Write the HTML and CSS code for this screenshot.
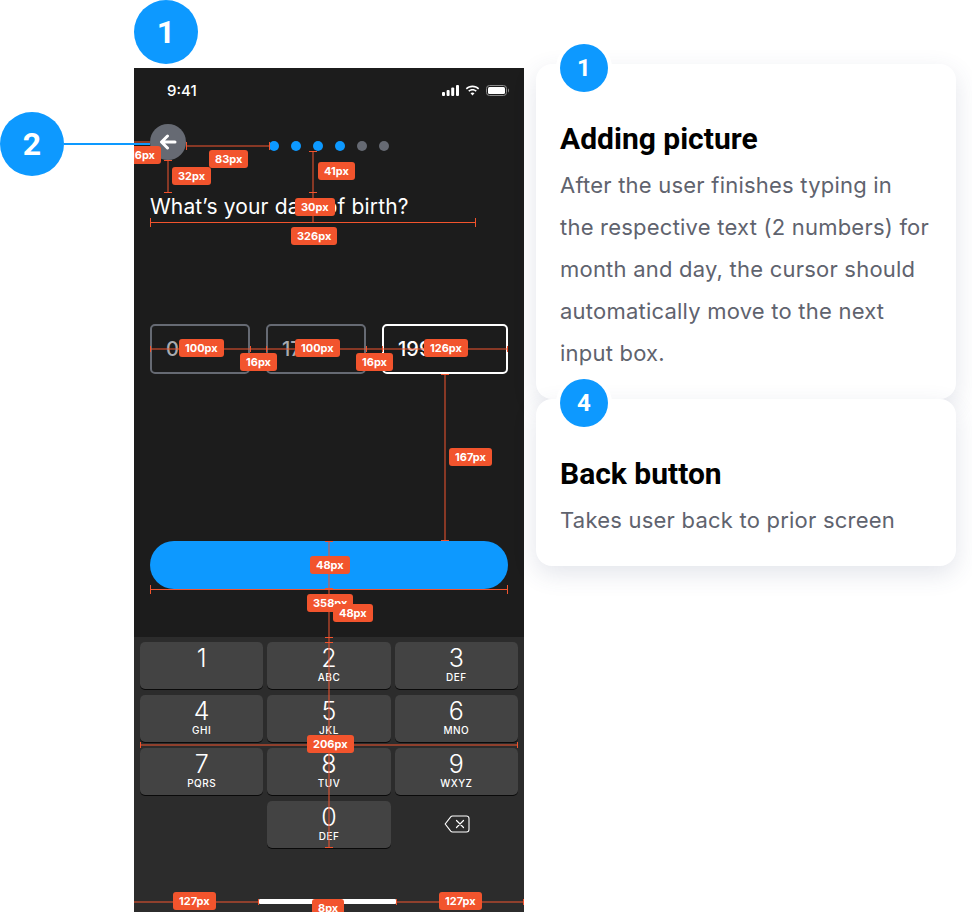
FILE: index.html
```html
<!DOCTYPE html>
<html lang="en">

<head>
    <meta charset="UTF-8">
    <meta name="viewport" content="width=device-width, initial-scale=1.0">
    <title>Date of birth - Annotated spec</title>
    <link rel="stylesheet" href="styles.css">
</head>

<body>
    <div class="canvas">
        <span class="marker marker-screen">1</span>
        <span class="marker marker-back">2</span>
        <div class="marker-line"></div>

        <div class="phone">
            <div class="status-bar">
                <span class="time">9:41</span>
                <div class="status-icons">
                    <svg width="17" height="11" viewBox="0 0 17 11">
                        <rect x="0" y="7" width="3" height="4" rx="1" fill="#fff" />
                        <rect x="4.600" y="5" width="3" height="6" rx="1" fill="#fff" />
                        <rect x="9.200" y="2.500" width="3" height="8.500" rx="1" fill="#fff" />
                        <rect x="14" y="0" width="3" height="11" rx="1" fill="#fff" />
                    </svg>
                    <svg width="15" height="11" viewBox="0 0 15 11">
                        <path d="M7.500 2.200c2.200 0 4.100.8 5.600 2.200l1.100-1.200C12.400 1.400 10.100.4 7.500.4S2.600 1.400.8 3.200l1.100 1.200c1.500-1.400 3.400-2.200 5.600-2.200z" fill="#fff" />
                        <path d="M7.500 5.600c1.200 0 2.300.5 3.200 1.200l1.100-1.200c-1.200-1-2.700-1.700-4.300-1.700s-3.100.7-4.300 1.700l1.100 1.200c.9-.7 2-1.200 3.200-1.200z" fill="#fff" />
                        <path d="M7.500 7.400c-.8 0-1.500.3-2 .8l2 2.300 2-2.300c-.5-.5-1.200-.8-2-.8z" fill="#fff" />
                    </svg>
                    <svg width="23" height="11" viewBox="0 0 23 11">
                        <rect x=".5" y=".5" width="20" height="10" rx="3" fill="none" stroke="#8a8a8a" />
                        <rect x="2" y="2" width="17" height="7" rx="1.500" fill="#fff" />
                        <path d="M22 3.500v4c.6-.3 1-1.100 1-2s-.4-1.700-1-2z" fill="#8a8a8a" />
                    </svg>
                </div>
            </div>

            <div class="main-content">
                <div class="top-row">
                    <div class="back-btn">
                        <svg width="18" height="16" viewBox="0 0 18 16">
                            <path d="M16 8H3M8.500 2 2.500 8l6 6" fill="none" stroke="#fff" stroke-width="3" stroke-linecap="round" stroke-linejoin="round" />
                        </svg>
                    </div>
                    <div class="dots">
                        <span class="dot on"></span>
                        <span class="dot on"></span>
                        <span class="dot on"></span>
                        <span class="dot on"></span>
                        <span class="dot"></span>
                        <span class="dot"></span>
                    </div>
                </div>

                <h2 class="question">What’s your date of birth?</h2>

                <div class="date-inputs">
                    <div class="date-box short">01</div>
                    <div class="date-box short">17</div>
                    <div class="date-box active">1990</div>
                </div>

                <div class="next-btn"></div>
            </div>

            <div class="keyboard">
                <div class="keys">
                    <div class="key"><span class="num">1</span></div>
                    <div class="key"><span class="num">2</span><span class="sub">ABC</span></div>
                    <div class="key"><span class="num">3</span><span class="sub">DEF</span></div>
                    <div class="key"><span class="num">4</span><span class="sub">GHI</span></div>
                    <div class="key"><span class="num">5</span><span class="sub">JKL</span></div>
                    <div class="key"><span class="num">6</span><span class="sub">MNO</span></div>
                    <div class="key"><span class="num">7</span><span class="sub">PQRS</span></div>
                    <div class="key"><span class="num">8</span><span class="sub">TUV</span></div>
                    <div class="key"><span class="num">9</span><span class="sub">WXYZ</span></div>
                    <div class="key-empty"></div>
                    <div class="key"><span class="num">0</span><span class="sub">DEF</span></div>
                    <div class="key-empty">
                        <svg class="backspace" width="26" height="18" viewBox="0 0 26 18">
                            <path d="M8.500 1h14a2.500 2.500 0 0 1 2.500 2.500v11a2.500 2.500 0 0 1-2.500 2.500h-14a2.500 2.500 0 0 1-1.800-.8L1.200 9l5.500-7.200a2.500 2.500 0 0 1 1.800-.8z" fill="none" stroke="#fff" stroke-width="1.100" />
                            <path d="M12.500 5.500l7 7M19.500 5.500l-7 7" fill="none" stroke="#fff" stroke-width="1.200" stroke-linecap="round" />
                        </svg>
                    </div>
                </div>
                <div class="home-bar"></div>
            </div>

            <!-- measuring lines, in page coordinates -->
            <svg class="measure-lines" width="390" height="844" viewBox="134 68 390 844">
                <g class="dim">
                    <path d="M134 142H150M186 146H269M168 160V192M313 151V222M150 349H508M445 374V541M329 541V848M140 745H518M134 902H258M397 902H524" />
                </g>
                <g class="bright">
                    <path d="M150 222.500H476M150 589.500H508" />
                    <path d="M150.500 218V227M475.500 218V227M150.500 585V594M507.500 585V594" />
                    <path d="M186.500 142V150M269.500 142V150M164 160.500H172M164 192.500H172M309 151.500H317M309 192.500H317" />
                    <path d="M150.500 346V352M250.500 346V352M266.500 346V352M366.500 346V352M382.500 346V352M507.500 346V352" />
                    <path d="M441 374.500H449M441 540.500H449M325 541.500H333M325 588.500H333M325 637.500H333M325 642.500H333M325 847.500H333" />
                    <path d="M140.500 742V748M517.500 742V748M258.500 899V905M396.500 899V905M523.500 899V905" />
                </g>
            </svg>

            <span class="badge b-left">16px</span>
            <span class="badge b-83">83px</span>
            <span class="badge b-32">32px</span>
            <span class="badge b-41">41px</span>
            <span class="badge b-30">30px</span>
            <span class="badge b-326">326px</span>
            <span class="badge b-100a">100px</span>
            <span class="badge b-16a">16px</span>
            <span class="badge b-100b">100px</span>
            <span class="badge b-16b">16px</span>
            <span class="badge b-126">126px</span>
            <span class="badge b-167">167px</span>
            <span class="badge b-48a">48px</span>
            <span class="badge b-358">358px</span>
            <span class="badge b-48b">48px</span>
            <span class="badge b-206">206px</span>
            <span class="badge b-127a">127px</span>
            <span class="badge b-8">8px</span>
            <span class="badge b-127b">127px</span>
        </div>

        <div class="notes">
            <div class="note">
                <span class="note-num">1</span>
                <h3>Adding picture</h3>
                <p>After the user finishes typing in<br>the respective text (2 numbers) for month and day, the cursor should automatically move to the next input box.</p>
            </div>
            <div class="note">
                <span class="note-num">4</span>
                <h3>Back button</h3>
                <p>Takes user back to prior screen</p>
            </div>
        </div>
    </div>
</body>

</html>
```
FILE: styles.css
```css
/* Reset default margin and padding */
* {
    margin: 0;
    padding: 0;
    box-sizing: border-box;
}

body {
    font-family: "Inter", sans-serif;
    background-color: #fff;
}

/* Canvas holds phone and notes side by side */
.canvas {
    position: relative;
    display: flex;
    align-items: flex-start;
    width: 972px;
    height: 912px;
    overflow: hidden;
}

/* Big numbered markers */
.marker {
    position: absolute;
    z-index: 3;
    display: flex;
    align-items: center;
    justify-content: center;
    width: 64px;
    height: 64px;
    border-radius: 50%;
    background-color: #0d99ff;
    color: #fff;
    font-family: "Roboto", sans-serif;
    font-size: 32px;
    font-weight: 700;
}

.marker-screen {
    left: 134px;
    top: 0;
}

.marker-back {
    left: 0;
    top: 112px;
}

.marker-line {
    position: absolute;
    z-index: 3;
    left: 64px;
    top: 143px;
    width: 86px;
    height: 2px;
    background-color: #0d99ff;
}

/* Phone */
.phone {
    position: relative;
    flex: none;
    width: 390px;
    height: 844px;
    margin: 68px 0 0 134px;
    background-color: #1c1c1c;
    overflow: hidden;
}

.status-bar {
    display: flex;
    align-items: center;
    justify-content: space-between;
    height: 44px;
    padding: 1px 15px 0 33px;
}

.time {
    color: #fff;
    font-size: 15px;
    font-weight: 500;
}

.status-icons {
    display: flex;
    align-items: center;
    gap: 6px;
}

.main-content {
    padding: 12px 16px 0;
}

.top-row {
    display: flex;
    align-items: flex-start;
    height: 36px;
}

.back-btn {
    display: flex;
    align-items: center;
    justify-content: center;
    width: 36px;
    height: 36px;
    border-radius: 50%;
    background-color: #666a73;
}

.dots {
    display: flex;
    gap: 12px;
    margin: 17px 0 0 83px;
}

.dot {
    width: 10px;
    height: 10px;
    border-radius: 50%;
    background-color: #666a73;
}

.dot.on {
    background-color: #0d99ff;
}

.question {
    width: 326px;
    height: 30px;
    margin-top: 32px;
    color: #fff;
    font-size: 21px;
    font-weight: 400;
    letter-spacing: 0.15px;
    line-height: 30px;
}

.date-inputs {
    display: flex;
    gap: 16px;
    margin-top: 102px;
}

.date-box {
    height: 50px;
    padding-left: 14px;
    border: 2px solid #666a73;
    border-radius: 5px;
    color: #a9abb0;
    font-size: 20px;
    font-weight: 500;
    line-height: 46px;
}

.date-box.short {
    width: 100px;
}

.date-box.active {
    width: 126px;
    border-color: #fff;
    color: #fff;
}

.next-btn {
    height: 48px;
    margin-top: 167px;
    border-radius: 24px;
    background-color: #0d99ff;
}

/* Number pad */
.keyboard {
    height: 275px;
    margin-top: 48px;
    padding: 5px 6px 0;
    background-color: #2c2c2c;
}

.keys {
    display: grid;
    grid-template-columns: repeat(3, 1fr);
    grid-auto-rows: 47px;
    gap: 6px 4px;
}

.key,
.key-empty {
    display: flex;
    flex-direction: column;
    align-items: center;
    justify-content: center;
}

.key {
    justify-content: flex-start;
    border-radius: 5px;
    background-color: #434343;
    box-shadow: 0 1px 0 #0a0a0a;
    color: #fff;
}

.num {
    height: 29px;
    font-size: 25px;
    font-weight: 300;
    line-height: 32px;
}

.sub {
    font-size: 10px;
    font-weight: 500;
    letter-spacing: 0.5px;
    line-height: 12px;
}

.backspace {
    margin: 0 0 1px 2px;
}

.home-bar {
    width: 139px;
    height: 5px;
    margin: 51px 0 0 118px;
    border-radius: 3px;
    background-color: #fff;
}

/* Spec overlay */
.measure-lines {
    position: absolute;
    left: 0;
    top: 0;
}

.measure-lines path {
    fill: none;
    stroke: #f2542d;
    stroke-width: 1;
    shape-rendering: crispEdges;
}

.measure-lines .dim path {
    stroke-width: 2;
    opacity: 0.5;
}

.badge {
    position: absolute;
    height: 18px;
    padding: 0 6px;
    border-radius: 3px;
    background-color: #f2542d;
    color: #fff;
    font-size: 11px;
    font-weight: 700;
    line-height: 18px;
}

.b-left { left: -10px; top: 78px; }
.b-83 { left: 75px; top: 82px; }
.b-32 { left: 38px; top: 99px; }
.b-41 { left: 184px; top: 94px; }
.b-30 { left: 161px; top: 130px; }
.b-326 { left: 157px; top: 159px; }
.b-100a { left: 45px; top: 271px; }
.b-16a { left: 106px; top: 285px; }
.b-100b { left: 161px; top: 271px; }
.b-16b { left: 222px; top: 285px; }
.b-126 { left: 290px; top: 271px; }
.b-167 { left: 315px; top: 380px; }
.b-48a { left: 176px; top: 488px; }
.b-358 { left: 173px; top: 526px; }
.b-48b { left: 199px; top: 536px; }
.b-206 { left: 173px; top: 667px; }
.b-127a { left: 39px; top: 824px; }
.b-8 { left: 178px; top: 831px; }
.b-127b { left: 305px; top: 824px; }

/* Notes column */
.notes {
    flex: none;
    width: 420px;
    margin: 64px 0 0 12px;
}

.note {
    position: relative;
    padding: 56px 24px 25px;
    border-radius: 16px;
    background-color: #fff;
    box-shadow: 0 8px 24px rgba(60, 70, 110, 0.14);
}

.note-num {
    position: absolute;
    left: 24px;
    top: -20px;
    display: flex;
    align-items: center;
    justify-content: center;
    width: 48px;
    height: 48px;
    border-radius: 50%;
    background-color: #0d99ff;
    box-shadow: 0 0 0 4px #fff;
    color: #fff;
    font-family: "Roboto", sans-serif;
    font-size: 24px;
    font-weight: 700;
}

.note h3 {
    color: #000;
    font-family: "Roboto", sans-serif;
    font-size: 30px;
    font-weight: 700;
    line-height: 38px;
}

.note p {
    margin-top: 6px;
    color: #5f636e;
    font-size: 22px;
    letter-spacing: 0.22px;
    line-height: 42px;
}
```
